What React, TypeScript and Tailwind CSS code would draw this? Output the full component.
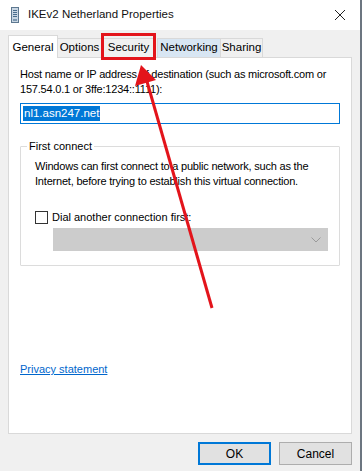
import React from 'react';

const font = { fontFamily: '"Liberation Sans", Arial, sans-serif' };

const Tab: React.FC<{ label: string; className?: string }> = ({ label, className = '' }) => (
  <div className={`h-[19px] flex items-center justify-center border border-b-0 border-[#d9d9d9] -ml-px text-[11.5px] text-[#000] ${className}`}>
    {label}
  </div>
);

export default function App() {
  return (
    <div className="relative w-[362px] h-[471px] bg-[#f0f0f0] border-r-2 border-[#6c7680] overflow-hidden text-black" style={font}>
      {/* title bar */}
      <div className="h-[30px] bg-white flex items-center">
        <svg width="8" height="16" viewBox="0 0 8 16" className="ml-[11px]">
          <rect x="0.5" y="0.5" width="7" height="15" fill="#c9d6e3" stroke="#5d7890" />
          <rect x="2" y="3" width="4" height="1" fill="#4a6d8c" />
          <rect x="2" y="5" width="4" height="1" fill="#4a6d8c" />
          <rect x="2" y="7" width="4" height="1" fill="#4a6d8c" />
          <rect x="2" y="9" width="4" height="1" fill="#4a6d8c" />
          <rect x="2" y="12" width="4" height="2" fill="#7d98b0" />
        </svg>
        <span className="ml-[9px] text-[11.5px] text-[#111]">IKEv2 Netherland Properties</span>
        <svg width="12" height="12" viewBox="0 0 12 12" className="ml-auto mr-[14px]">
          <path d="M1 1 L11 11 M11 1 L1 11" stroke="#222" strokeWidth="1" />
        </svg>
      </div>

      <div className="px-[8px] pt-[5px]">
        {/* tabs */}
        <div className="flex items-end h-[22px]">
          <div className="w-[50px] h-[23px] flex justify-center pt-[3px] border border-b-0 border-[#d9d9d9] bg-white text-[11.5px] relative z-10 -mb-px">
            General
          </div>
          <Tab label="Options" className="w-[45px] bg-[#f0f0f0]" />
          <Tab label="Security" className="w-[55px] bg-[#f0f0f0]" />
          <Tab label="Networking" className="w-[64px] bg-[#d8e6f3] border-[#c4d8ec] ml-[1px]" />
          <Tab label="Sharing" className="w-[43px] bg-[#f0f0f0]" />
        </div>

        {/* panel */}
        <div className="h-[377px] bg-white border border-[#d9d9d9] px-[11px] pt-[9px] text-[11px] leading-[15px]">
          <p className="whitespace-nowrap tracking-[-0.2px]">
            Host name or IP address of destination (such as microsoft.com or
            <br />
            157.54.0.1 or 3ffe:1234::1111):
          </p>
          <div className="mt-[6px] h-[21px] border border-[#0078d7] flex items-center px-[2px]">
            <span className="bg-[#0078d7] text-white text-[11.5px] leading-[15px] px-px">nl1.asn247.net</span>
          </div>

          {/* group box */}
          <div className="relative mt-[22px] h-[120px] border border-[#dcdcdc] rounded-[1px] px-[8px] pt-[12px]">
            <span className="absolute -top-[8px] left-[6px] bg-white px-[2px]">First connect</span>
            <p className="whitespace-nowrap tracking-[-0.2px] pl-[6px]">
              Windows can first connect to a public network, such as the
              <br />
              Internet, before trying to establish this virtual connection.
            </p>
            <label className="flex items-center mt-[21px] pl-[6px] gap-[4px]">
              <span className="w-[13px] h-[13px] border border-[#333] bg-white" />
              <span>Dial another connection first:</span>
            </label>
            <div className="mt-[3px] ml-[24px] mr-[3px] h-[23px] bg-[#cccccc] border border-[#cccccc] flex items-center justify-end pr-[6px]">
              <svg width="10" height="6" viewBox="0 0 10 6">
                <path d="M0.5 0.5 L5 5 L9.5 0.5" fill="none" stroke="#9a9a9a" strokeWidth="1" />
              </svg>
            </div>
          </div>

          <a className="block mt-[96px] text-[#0066cc] underline">Privacy statement</a>
        </div>

        {/* buttons */}
        <div className="flex justify-end gap-[8px] mt-[8px]">
          <button className="w-[73px] h-[23px] bg-[#e1e1e1] border-2 border-[#0078d7] text-[12px]">OK</button>
          <button className="w-[73px] h-[23px] bg-[#e1e1e1] border border-[#adadad] text-[12px]">Cancel</button>
        </div>
      </div>

      {/* annotation overlay */}
      <div className="absolute left-[101px] top-[33px] w-[55px] h-[27px] border-[3px] border-[#e3141b]" />
      <svg className="absolute left-0 top-0 pointer-events-none" width="362" height="471">
        <line x1="212" y1="308" x2="146" y2="78" stroke="#e3141b" strokeWidth="3" />
        <polygon points="141,65 135,86 156,80" fill="#e3141b" />
      </svg>
    </div>
  );
}
